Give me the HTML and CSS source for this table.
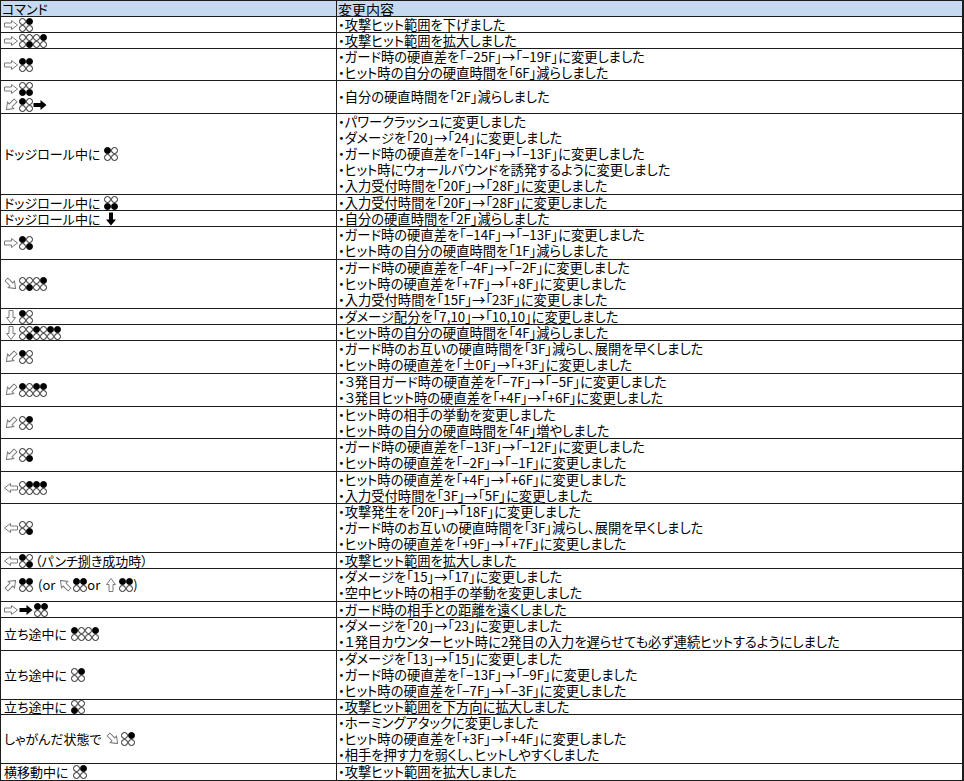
FILE: index.html
```html
<!DOCTYPE html>
<html lang="ja">
<head>
<meta charset="utf-8">
<title>変更内容</title>
<link rel="stylesheet" href="styles.css">
</head>
<body>
<svg class="defs" width="0" height="0" aria-hidden="true">
  <symbol id="oa" viewBox="0 0 14 14"><path d="M0.5 5 H7.5 V2.5 L13.5 7 L7.5 11.5 V9 H0.5 Z" fill="#fff" stroke="#7a7a7a" stroke-width="1" stroke-linejoin="miter"/></symbol>
  <symbol id="sa" viewBox="0 0 14 14"><path d="M0.5 5 H7.5 V2 L13.5 7 L7.5 12 V9 H0.5 Z" fill="#000"/></symbol>
</svg>
<div class="tbl">
  <div class="row head h16"><div class="c1">コマンド</div><div class="c2">変更内容</div></div>

  <div class="row h16"><div class="c1"><div class="ln"><svg class="a"><use href="#oa"/></svg><span class="b"><i></i><i class="f"></i><i></i><i></i></span></div></div>
    <div class="c2"><div>・攻撃ヒット範囲を下げました</div></div></div>

  <div class="row h16"><div class="c1"><div class="ln"><svg class="a"><use href="#oa"/></svg><span class="b"><i></i><i></i><i></i><i class="f"></i></span><span class="b"><i></i><i class="f"></i><i></i><i></i></span></div></div>
    <div class="c2"><div>・攻撃ヒット範囲を拡大しました</div></div></div>

  <div class="row h32"><div class="c1"><div class="ln"><svg class="a"><use href="#oa"/></svg><span class="b"><i class="f"></i><i class="f"></i><i></i><i></i></span></div></div>
    <div class="c2"><div>・ガード時の硬直差を「−25F」→「−19F」に変更しました</div><div>・ヒット時の自分の硬直時間を「6F」減らしました</div></div></div>

  <div class="row h33"><div class="c1"><div class="ln"><svg class="a"><use href="#oa"/></svg><span class="b"><i></i><i></i><i class="f"></i><i class="f"></i></span></div><div class="ln"><svg class="a dl"><use href="#oa"/></svg><span class="b"><i class="f"></i><i></i><i></i><i></i></span><svg class="a"><use href="#sa"/></svg></div></div>
    <div class="c2"><div>・自分の硬直時間を「2F」減らしました</div></div></div>

  <div class="row h81"><div class="c1"><div class="ln"><span class="t">ドッジロール中に</span><span class="b"><i class="f"></i><i></i><i></i><i></i></span></div></div>
    <div class="c2"><div>・パワークラッシュに変更しました</div><div>・ダメージを「20」→「24」に変更しました</div><div>・ガード時の硬直差を「−14F」→「−13F」に変更しました</div><div>・ヒット時にウォールバウンドを誘発するように変更しました</div><div>・入力受付時間を「20F」→「28F」に変更しました</div></div></div>

  <div class="row h16"><div class="c1"><div class="ln"><span class="t">ドッジロール中に</span><span class="b"><i></i><i></i><i class="f"></i><i class="f"></i></span></div></div>
    <div class="c2"><div>・入力受付時間を「20F」→「28F」に変更しました</div></div></div>

  <div class="row h16"><div class="c1"><div class="ln"><span class="t">ドッジロール中に</span><svg class="a dn"><use href="#sa"/></svg></div></div>
    <div class="c2"><div>・自分の硬直時間を「2F」減らしました</div></div></div>

  <div class="row h33"><div class="c1"><div class="ln"><svg class="a"><use href="#oa"/></svg><span class="b"><i class="f"></i><i></i><i></i><i class="f"></i></span></div></div>
    <div class="c2"><div>・ガード時の硬直差を「−14F」→「−13F」に変更しました</div><div>・ヒット時の自分の硬直時間を「1F」減らしました</div></div></div>

  <div class="row h49"><div class="c1"><div class="ln"><svg class="a dr"><use href="#oa"/></svg><span class="b"><i></i><i></i><i></i><i class="f"></i></span><span class="b"><i></i><i class="f"></i><i></i><i></i></span></div></div>
    <div class="c2"><div>・ガード時の硬直差を「−4F」→「−2F」に変更しました</div><div>・ヒット時の硬直差を「+7F」→「+8F」に変更しました</div><div>・入力受付時間を「15F」→「23F」に変更しました</div></div></div>

  <div class="row h16"><div class="c1"><div class="ln"><svg class="a dn"><use href="#oa"/></svg><span class="b"><i class="f"></i><i></i><i></i><i></i></span></div></div>
    <div class="c2"><div>・ダメージ配分を「7,10」→「10,10」に変更しました</div></div></div>

  <div class="row h16"><div class="c1"><div class="ln"><svg class="a dn"><use href="#oa"/></svg><span class="b"><i></i><i></i><i></i><i class="f"></i></span><span class="b"><i class="f"></i><i></i><i></i><i></i></span><span class="b"><i class="f"></i><i class="f"></i><i></i><i></i></span></div></div>
    <div class="c2"><div>・ヒット時の自分の硬直時間を「4F」減らしました</div></div></div>

  <div class="row h33"><div class="c1"><div class="ln"><svg class="a dl"><use href="#oa"/></svg><span class="b"><i class="f"></i><i></i><i></i><i></i></span></div></div>
    <div class="c2"><div>・ガード時のお互いの硬直時間を「3F」減らし、展開を早くしました</div><div>・ヒット時の硬直差を「±0F」→「+3F」に変更しました</div></div></div>

  <div class="row h33"><div class="c1"><div class="ln"><svg class="a dl"><use href="#oa"/></svg><span class="b"><i class="f"></i><i></i><i></i><i></i></span><span class="b"><i class="f"></i><i class="f"></i><i></i><i></i></span></div></div>
    <div class="c2"><div>・３発目ガード時の硬直差を「−7F」→「−5F」に変更しました</div><div>・３発目ヒット時の硬直差を「+4F」→「+6F」に変更しました</div></div></div>

  <div class="row h32"><div class="c1"><div class="ln"><svg class="a dl"><use href="#oa"/></svg><span class="b"><i></i><i class="f"></i><i></i><i></i></span></div></div>
    <div class="c2"><div>・ヒット時の相手の挙動を変更しました</div><div>・ヒット時の自分の硬直時間を「4F」増やしました</div></div></div>

  <div class="row h33"><div class="c1"><div class="ln"><svg class="a dl"><use href="#oa"/></svg><span class="b"><i></i><i></i><i></i><i class="f"></i></span></div></div>
    <div class="c2"><div>・ガード時の硬直差を「−13F」→「−12F」に変更しました</div><div>・ヒット時の硬直差を「−2F」→「−1F」に変更しました</div></div></div>

  <div class="row h32"><div class="c1"><div class="ln"><svg class="a lf"><use href="#oa"/></svg><span class="b"><i></i><i class="f"></i><i></i><i></i></span><span class="b"><i class="f"></i><i class="f"></i><i></i><i></i></span></div></div>
    <div class="c2"><div>・ヒット時の硬直差を「+4F」→「+6F」に変更しました</div><div>・入力受付時間を「3F」→「5F」に変更しました</div></div></div>

  <div class="row h49"><div class="c1"><div class="ln"><svg class="a lf"><use href="#oa"/></svg><span class="b"><i></i><i></i><i></i><i class="f"></i></span></div></div>
    <div class="c2"><div>・攻撃発生を「20F」→「18F」に変更しました</div><div>・ガード時のお互いの硬直時間を「3F」減らし、展開を早くしました</div><div>・ヒット時の硬直差を「+9F」→「+7F」に変更しました</div></div></div>

  <div class="row h16"><div class="c1"><div class="ln"><svg class="a lf"><use href="#oa"/></svg><span class="b"><i class="f"></i><i></i><i></i><i class="f"></i></span><span class="t2">（パンチ捌き成功時）</span></div></div>
    <div class="c2"><div>・攻撃ヒット範囲を拡大しました</div></div></div>

  <div class="row h33"><div class="c1"><div class="ln"><svg class="a ur"><use href="#oa"/></svg><span class="b"><i class="f"></i><i class="f"></i><i></i><i></i></span><span class="t3">(or</span><svg class="a ul"><use href="#oa"/></svg><span class="b"><i class="f"></i><i class="f"></i><i></i><i></i></span><span class="t4">or</span><svg class="a up"><use href="#oa"/></svg><span class="b"><i class="f"></i><i class="f"></i><i></i><i></i></span><span>)</span></div></div>
    <div class="c2"><div>・ダメージを「15」→「17」に変更しました</div><div>・空中ヒット時の相手の挙動を変更しました</div></div></div>

  <div class="row h16"><div class="c1"><div class="ln"><svg class="a"><use href="#oa"/></svg><svg class="a"><use href="#sa"/></svg><span class="b"><i class="f"></i><i class="f"></i><i></i><i></i></span></div></div>
    <div class="c2"><div>・ガード時の相手との距離を遠くしました</div></div></div>

  <div class="row h33"><div class="c1"><div class="ln"><span class="t">立ち途中に</span><span class="b"><i class="f"></i><i></i><i></i><i></i></span><span class="b"><i></i><i class="f"></i><i></i><i></i></span></div></div>
    <div class="c2"><div>・ダメージを「20」→「23」に変更しました</div><div>・１発目カウンターヒット時に2発目の入力を遅らせても必ず連続ヒットするようにしました</div></div></div>

  <div class="row h49"><div class="c1"><div class="ln"><span class="t">立ち途中に</span><span class="b"><i></i><i class="f"></i><i></i><i></i></span></div></div>
    <div class="c2"><div>・ダメージを「13」→「15」に変更しました</div><div>・ガード時の硬直差を「−13F」→「−9F」に変更しました</div><div>・ヒット時の硬直差を「−7F」→「−3F」に変更しました</div></div></div>

  <div class="row h15"><div class="c1"><div class="ln"><span class="t">立ち途中に</span><span class="b"><i></i><i></i><i class="f"></i><i></i></span></div></div>
    <div class="c2"><div>・攻撃ヒット範囲を下方向に拡大しました</div></div></div>

  <div class="row h49"><div class="c1"><div class="ln"><span class="t">しゃがんだ状態で</span><svg class="a dr"><use href="#oa"/></svg><span class="b"><i></i><i class="f"></i><i></i><i></i></span></div></div>
    <div class="c2"><div>・ホーミングアタックに変更しました</div><div>・ヒット時の硬直差を「+3F」→「+4F」に変更しました</div><div>・相手を押す力を弱くし、ヒットしやすくしました</div></div></div>

  <div class="row h17"><div class="c1"><div class="ln"><span class="t">横移動中に</span><span class="b"><i></i><i class="f"></i><i></i><i></i></span></div></div>
    <div class="c2"><div>・攻撃ヒット範囲を拡大しました</div></div></div>
</div>
</body>
</html>
```

FILE: styles.css
```css
html, body {
  margin: 0;
  padding: 0;
  background: #fff;
}
body {
  font-family: "Noto Sans CJK JP", "Noto Sans", sans-serif;
  color: #000;
  font-feature-settings: "palt";
}
.defs {
  display: block;
  width: 0;
  height: 0;
  overflow: hidden;
}
.tbl {
  width: 964px;
  box-sizing: border-box;
  border-top: 1px solid #1c1c1c;
  border-left: 1px solid #1c1c1c;
  border-right: 2px solid #1c1c1c;
}
.row {
  display: grid;
  grid-template-columns: 336px 1fr;
  box-sizing: border-box;
  border-bottom: 1px solid #1c1c1c;
  overflow: hidden;
}
.h15 { height: 15px; }
.h16 { height: 16px; }
.h17 { height: 17px; }
.h32 { height: 32px; }
.h33 { height: 33px; }
.h49 { height: 49px; }
.h81 { height: 81px; }
.c1 {
  border-right: 1px solid #1c1c1c;
  padding-left: 3px;
  font-size: 13px;
  line-height: 16px;
  display: flex;
  flex-direction: column;
  justify-content: center;
  overflow: hidden;
  white-space: nowrap;
}
.c2 {
  padding-left: 1px;
  font-size: 13.3px;
  line-height: 16px;
  display: flex;
  flex-direction: column;
  justify-content: center;
  overflow: hidden;
  white-space: nowrap;
}
.head {
  background: #c5d9f1;
}
.head .c1 {
  font-size: 13px;
  padding-left: 1px;
}
.head .c2 {
  font-size: 14px;
  padding-left: 1px;
}
.ln {
  display: flex;
  align-items: center;
  height: 16px;
}
.t {
  margin-right: 4px;
}
.t2 {
  margin-left: 2px;
}
.t3 {
  margin-left: 5px;
  margin-right: 3px;
}
.t4 {
  margin-right: 4px;
}
.a {
  width: 14px;
  height: 14px;
  flex: none;
  margin-right: 1px;
}
.a.dn { transform: rotate(90deg); }
.a.up { transform: rotate(-90deg); }
.a.lf { transform: rotate(180deg); }
.a.dr { transform: rotate(45deg); }
.a.dl { transform: rotate(135deg); }
.a.ul { transform: rotate(-135deg); }
.a.ur { transform: rotate(-45deg); }
.b {
  display: inline-grid;
  grid-template-columns: 7px 7px;
  grid-auto-rows: 7px;
  flex: none;
}
.b i {
  display: block;
  width: 7px;
  height: 7px;
  box-sizing: border-box;
  border: 1px solid #222;
  border-radius: 50%;
  background: #fff;
}
.b i.f {
  background: #000;
  border-color: #000;
}
```
